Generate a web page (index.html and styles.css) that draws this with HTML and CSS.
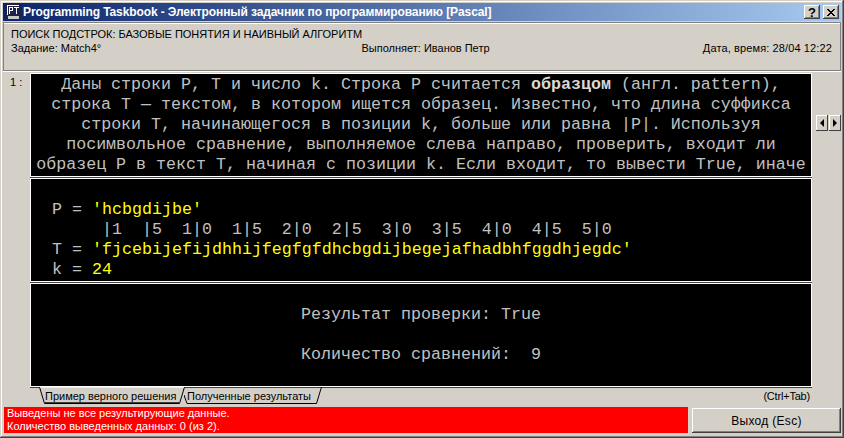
FILE: index.html
```html
<!DOCTYPE html>
<html lang="ru">
<head>
<meta charset="utf-8">
<title>Programming Taskbook</title>
<link rel="stylesheet" href="styles.css">
</head>
<body>
<div class="window">
  <div class="titlebar">
    <svg class="appicon" width="16" height="16" viewBox="0 0 16 16" shape-rendering="crispEdges">
      <rect x="0" y="0" width="16" height="16" fill="#20204a"/>
      <rect x="2" y="1" width="12" height="1" fill="#fff"/>
      <rect x="2" y="1" width="1" height="10" fill="#fff"/>
      <rect x="4" y="3" width="4" height="1" fill="#fff"/>
      <rect x="4" y="3" width="1" height="7" fill="#fff"/>
      <rect x="7" y="3" width="1" height="4" fill="#fff"/>
      <rect x="4" y="6" width="4" height="1" fill="#fff"/>
      <rect x="9" y="3" width="5" height="1" fill="#fff"/>
      <rect x="11" y="3" width="1" height="7" fill="#fff"/>
      <rect x="3" y="12" width="11" height="3" fill="#c8c8c8"/>
    </svg>
    <span class="title-text">Programming Taskbook - Электронный задачник по программированию [Pascal]</span>
    <span class="capbtn">?</span>
    <span class="capbtn capbtn-close">
      <svg width="8" height="7" viewBox="0 0 8 7" shape-rendering="crispEdges"><path d="M0 0h2v1h-2zM6 0h2v1h-2zM1 1h2v1h-2zM5 1h2v1h-2zM2 2h4v1h-4zM3 3h2v1h-2zM2 4h4v1h-4zM1 5h2v1h-2zM5 5h2v1h-2zM0 6h2v1h-2zM6 6h2v1h-2z" fill="#000"/></svg>
    </span>
  </div>
  <div class="header">
    <div class="topic">ПОИСК ПОДСТРОК: БАЗОВЫЕ ПОНЯТИЯ И НАИВНЫЙ АЛГОРИТМ</div>
    <div class="meta">
      <span class="meta-cell">Задание: Match4°</span>
      <span class="meta-cell meta-mid">Выполняет: Иванов Петр</span>
      <span class="meta-cell meta-end">Дата, время: 28/04 12:22</span>
    </div>
  </div>
  <div class="main">
    <div class="pagenum">1 :</div>
    <div class="panels">
      <div class="panel panel-task">
        <div class="ln">Даны строки P, T и число k. Строка P считается <b class="term">образцом</b> (англ. pattern),</div>
        <div class="ln">строка T — текстом, в котором ищется образец. Известно, что длина суффикса</div>
        <div class="ln">строки T, начинающегося в позиции k, больше или равна |P|. Используя</div>
        <div class="ln">посимвольное сравнение, выполняемое слева направо, проверить, входит ли</div>
        <div class="ln">образец P в текст T, начиная с позиции k. Если входит, то вывести True, иначе</div>
      </div>
      <div class="panel panel-data">
        <div class="ln">P = <span class="val">'hcbgdijbe'</span></div>
        <div class="ln">     |1  |5  1|0  1|5  2|0  2|5  3|0  3|5  4|0  4|5  5|0</div>
        <div class="ln">T = <span class="val">'fjcebijefijdhhijfegfgfdhcbgdijbegejafhadbhfggdhjegdc'</span></div>
        <div class="ln">k = <span class="val">24</span></div>
      </div>
      <div class="panel panel-result">
        <div class="ln">Результат проверки: True</div>
        <div class="ln">&nbsp;</div>
        <div class="ln">Количество сравнений:  9</div>
      </div>
    </div>
    <div class="scroller">
      <span class="scrollbtn"><i class="tri tri-left"></i></span>
      <span class="scrollbtn"><i class="tri tri-right"></i></span>
    </div>
  </div>
  <div class="tabs">
    <div class="tab tab-active">
      <svg class="tab-shape" width="146" height="17" viewBox="0 0 146 17"><path d="M0 0 H146 L141 16 H5 Z" fill="#d4d0c8"/><path d="M0 0.5 H146" stroke="#f0eee8"/><path d="M0.5 0 L5.5 16.5 H140.5 L145.5 0" fill="none" stroke="#000"/><path d="M6 15.5 H140" stroke="#404040"/></svg>
      <span class="tab-label">Пример верного решения</span>
    </div>
    <div class="tab tab-other">
      <svg class="tab-shape" width="140" height="17" viewBox="0 0 140 17"><path d="M0 8 L3 16.5 H132.5 L137.5 0" fill="none" stroke="#000"/></svg>
      <span class="tab-label">Полученные результаты</span>
    </div>
    <div class="tabs-hint">(Ctrl+Tab)</div>
  </div>
  <div class="bottom">
    <div class="status">
      <div>Выведены не все результирующие данные.</div>
      <div>Количество выведенных данных: 0 (из 2).</div>
    </div>
    <div class="exit">Выход (Esc)</div>
  </div>
</div>
</body>
</html>
```
FILE: styles.css
```css
* { box-sizing: border-box; }
html, body { margin: 0; padding: 0; }
body {
  width: 844px;
  height: 438px;
  overflow: hidden;
  background: #d4d0c8;
  font-family: "Liberation Sans", Arial, sans-serif;
  font-size: 11px;
  color: #000;
}
.window {
  width: 844px;
  height: 438px;
  padding: 3px;
  display: flex;
  flex-direction: column;
  background: #d4d0c8;
  box-shadow: inset -1px -1px 0 #404040, inset 1px 1px 0 #d4d0c8, inset -2px -2px 0 #808080, inset 2px 2px 0 #fff;
}
.titlebar {
  height: 18px;
  display: flex;
  align-items: center;
  padding: 0 2px 0 2px;
  background: linear-gradient(to right, #0a246a, #a6caf0);
  flex: none;
}
.appicon { flex: none; margin-right: 2px; }
.title-text {
  flex: 1;
  color: #fff;
  font-family: "Liberation Sans", Arial, sans-serif;
  font-weight: bold;
  font-size: 12px;
  letter-spacing: -0.1px;
  white-space: nowrap;
}
.capbtn {
  width: 16px;
  height: 14px;
  background: #d4d0c8;
  box-shadow: inset -1px -1px 0 #404040, inset 1px 1px 0 #fff, inset -2px -2px 0 #808080;
  display: flex;
  align-items: center;
  justify-content: center;
  font-weight: bold;
  font-size: 13px;
}
.capbtn-close { margin-left: 3px; }
.header {
  flex: none;
  height: 49px;
  margin-top: 1px;
  padding: 3px 8px 0 7px;
  border: 1px solid #808080;
  box-shadow: inset 0 1px 0 #fff, 0 1px 0 #fff;
}
.topic { line-height: 14px; margin-top: 1px; letter-spacing: -0.03px; }
.meta { display: flex; line-height: 14px; }
.meta-cell { flex: 1; }
.meta-mid { text-align: center; padding-left: 8px; }
.meta-end { text-align: right; letter-spacing: 0.12px; }
.main {
  flex: none;
  display: flex;
  height: 314px;
  margin-top: 2px;
}
.pagenum {
  width: 27px;
  padding: 2px 0 0 7px;
  line-height: 14px;
}
.panels {
  width: 783px;
  display: flex;
  flex-direction: column;
  gap: 1px;
}
.panel {
  height: 104px;
  background: #000;
  color: #c0c0c0;
  border: 1px solid #fff;
  box-shadow: 0 1px 0 #404040;
  font-family: "Liberation Mono", "Courier New", monospace;
  font-size: 16.67px;
  line-height: 20px;
}
.ln { white-space: pre; }
.panel-task { padding-top: 1px; text-align: center; overflow: hidden; }
.term { color: #d8d8d8; font-weight: bold; }
.panel-data { padding: 21px 0 0 21px; }
.val { color: #ffff00; }
.panel-result { padding-top: 21px; text-align: center; }
.scroller {
  flex: none;
  padding: 42px 0 0 4px;
  display: flex;
  align-items: flex-start;
  gap: 1px;
}
.scrollbtn {
  width: 12px;
  height: 16px;
  display: flex;
  align-items: center;
  justify-content: center;
  box-shadow: inset -1px -1px 0 #404040, inset 1px 1px 0 #fff;
}
.tri { display: block; width: 0; height: 0; border-top: 4px solid transparent; border-bottom: 4px solid transparent; }
.tri-left { border-right: 4px solid #000; }
.tri-right { border-left: 4px solid #000; }
.tabs {
  flex: none;
  height: 20px;
  display: flex;
  padding: 0 0 0 36px;
}
.tab { position: relative; height: 17px; }
.tab-active { width: 145px; z-index: 1; }
.tab-other { width: 140px; }
.tab-shape { position: absolute; left: 0; top: 0; }
.tab-label { position: relative; display: block; line-height: 16px; padding: 1px 0 0 6px; white-space: nowrap; font-size: 11px; }
.tab-other .tab-label { padding-left: 3px; }
.tabs-hint { margin-left: auto; padding: 2px 31px 0 0; line-height: 14px; font-size: 11px; letter-spacing: -0.2px; }
.bottom {
  flex: none;
  display: flex;
  gap: 4px;
  padding: 0 0 0 1px;
  height: 26px;
}
.status {
  width: 684px;
  height: 26px;
  padding: 0 0 0 3px;
  background: #ff0000;
  color: #fff;
  line-height: 13px;
  font-size: 11px;
}
.exit {
  width: 149px;
  height: 25px;
  margin-top: 1px;
  display: flex;
  align-items: center;
  justify-content: center;
  box-shadow: inset -1px -1px 0 #404040, inset 1px 1px 0 #fff, inset -2px -2px 0 #808080;
  font-size: 12px;
  letter-spacing: 0.3px;
}
```
